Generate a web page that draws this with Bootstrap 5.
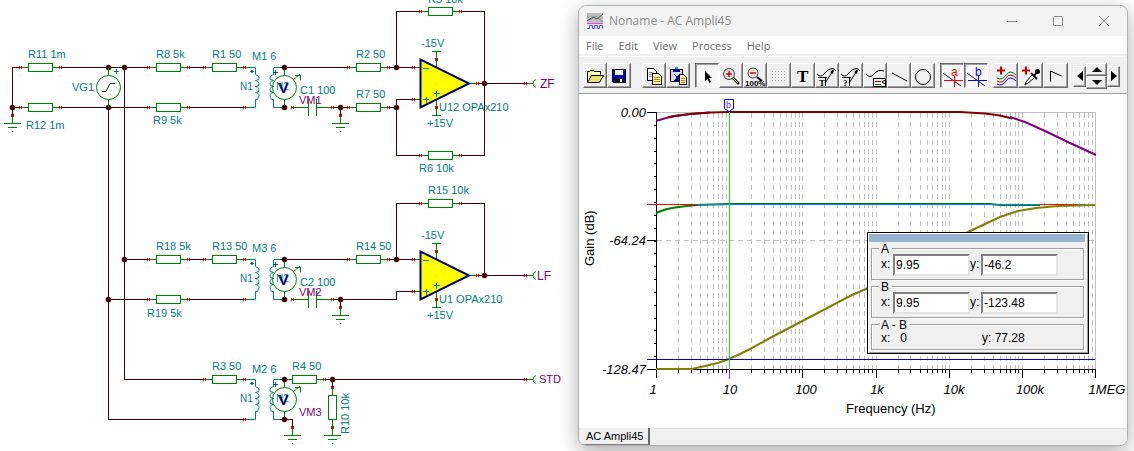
<!DOCTYPE html>
<html lang="en">
<head>
<meta charset="utf-8">
<meta name="viewport" content="width=device-width, initial-scale=1">
<title>Noname - AC Ampli45</title>
<link href="https://cdn.jsdelivr.net/npm/bootstrap@5.3.0/dist/css/bootstrap.min.css" rel="stylesheet">
<style>
  body { font-family: "Liberation Sans", Arial, sans-serif; font-size: 12px; line-height: 14px; color: #000; background: #fff; }
  .sheet { width: 50%; }
  .sheet svg, .plot svg { display: block; width: 100%; height: auto; }
  .sheet text { font-size: 11px; fill: #008080; }
  .sheet .small-t { font-size: 10px; }
  .sheet .probe { fill: #800080; }
  .sheet .out { font-size: 12px; fill: #800080; }
  .sheet .meter-v { font-size: 15px; font-weight: bold; fill: #000080; }
  .wire { stroke: #400000; fill: none; }
  .node-dot { fill: #400000; }
  .part { stroke: #008000; fill: none; }
  .pin { stroke: #d80000; fill: none; }
  .coil { stroke: #008080; fill: none; }

  .win { margin: 5px 6px 5px 11px; border: 1px solid #b0b0b0; border-radius: 8px; background: #f0f0f0; box-shadow: 0 6px 20px rgba(0,0,0,.32); overflow: hidden; min-width: 0; }
  .ui { font-family: "Open Sans", "Noto Sans", sans-serif; }
  .titlebar { height: 30px; background: #f3f3f3; color: #8a8a8a; padding-left: 8px; }
  .title-text { padding-left: 6px; }
  .caption-btn { width: 46px; height: 30px; border: 0; background: none; padding: 0; color: #8a8a8a; display: flex; align-items: center; justify-content: center; }
  .menu { height: 18px; background: #fff; gap: 15px; padding-left: 7px; line-height: 20px; font-size: 11px; }
  .menu a { color: #6d6d6d; text-decoration: none; }
  .tools { height: 40px; padding: 7px 0 0 4px; border-top: 2px solid #f0f0f0; border-bottom: 1px solid #a0a0a0; box-shadow: inset 0 1px #fff; column-gap: 5px; }
  .tools .after-file { margin-left: 6px; }
  .tb { width: 24px; height: 25px; padding: 0; border: 1px solid; border-color: #fff #696969 #696969 #fff; box-shadow: inset -1px -1px #a0a0a0; background: #f0f0f0; display: block; }
  .tb svg, .arrow svg { display: block; margin: auto; }
  .tb.wide { width: 25px; }
  .tb.down { border-color: #696969 #fff #fff #696969; box-shadow: inset 1px 1px #a0a0a0; background: #f8f8f8; }
  .arrow { padding: 0; border: 1px solid; border-color: #fff #696969 #696969 #fff; box-shadow: inset -1px -1px #a0a0a0; background: #f0f0f0; width: 13px; height: 21px; }
  .arrow.updown { width: 21px; height: 13px; display: block; }
  .plot { background: #fff; }
  .plot text { font-size: 13px; }
  .plot .mark-t { font-size: 9px; fill: #6020c0; }
  .tick-t { font-style: italic; }
  .ico-t { font-size: 12px; }
  .ico-pct { font-size: 8px; font-weight: bold; }
  .ico-serif { font: bold 17px "Liberation Serif", serif; }
  .ico-tag { font: bold 9px "Liberation Serif", serif; }

  .panel { top: 138px; right: 38px; width: 222px; border: 1px solid #000; background: #f0f0f0; padding: 1px 4px 3px 3px; box-shadow: inset 1px 1px #fff, inset -1px -1px #a0a0a0; }
  .panel-title { height: 8px; background: #99b4d1; margin: 0 -1px 0 -2px; }
  .grp { border: 1px solid #a0a0a0; box-shadow: 1px 1px #fff, inset 1px 1px #fff; position: relative; height: 32px; padding: 5px 0 0 9px; margin-top: 6px; }
  .grp legend { position: absolute; top: -7px; left: 7px; width: auto; float: none; margin: 0; padding: 0 3px 0 2px; font-size: 12px; line-height: 14px; background: #f0f0f0; }
  .grp label { width: 12px; line-height: 20px; }
  .grp input { width: 77px; height: 22px; padding: 0 1px; border: 2px solid; border-color: #808080 #e3e3e3 #e3e3e3 #808080; background: #fff; font-size: 12px; }
  .grp .ylab { width: 11px; }
  .grp.diff { height: 26px; }
  .grp output { line-height: 16px; }
  .sheet-tabs { height: 17px; border-top: 1px solid #e0e0e0; background: #f0f0f0; }
  .sheet-tab { font-size: 11px; line-height: 14px; height: 17px; margin: -1px 0 0 1px; padding: 0 5px 0 6px; border: 0; border-right: 2px solid #696969; border-bottom: 1px solid #808080; background: #f0f0f0; color: #000; }
</style>
</head>
<body class="d-flex align-items-start">

<main class="sheet flex-shrink-0">
<svg id="schematic" viewBox="0 0 567 451" role="img" aria-label="Circuit schematic">
  <defs>
    <g id="pin"><path class="pin" shape-rendering="crispEdges" d="M-1 -.500h1M1 -.500h1M-1 .500h3M-1 1.500h1M1 1.500h1"/></g>
    <g id="res">
      <path class="part" shape-rendering="crispEdges" d="M-20 .5h8M13 .5h8M-11.500 -3.500h24v8h-24z"/>
      <use href="#pin" x="-20"/><use href="#pin" x="20"/>
    </g>
    <g id="gnd">
      <path class="part" shape-rendering="crispEdges" d="M.5 8v8M-8 16.500h17M-4 20.500h9M0 24.500h1"/>
      <use href="#pin" y="8"/>
    </g>
    <g id="xfmr">
      <path class="part" shape-rendering="crispEdges" d="M0 .5h8M0 40.500h8M32 .5h8M32 40.500h8"/>
      <path class="coil" d="M6 .5h5.500v7q5 2 3 5l-3 1q5 1 3 5l-3 1q5 1 3 5l-3 1q5 1 3 5q-1 3-3 2v8H6M36 .5h-6.500v7q-5 2-3 5l3 1q-5 1-3 5l3 1q-5 1-3 5l3 1q-5 1-3 5q1 3 3 2v8H36"/>
      <path d="M8 3l2 1.500-2 1.500-2-1.500z" fill="#004040"/><path d="M29 5.500h5M31.500 3v5" stroke="#006060"/>
      <text class="small-t" x="-4" y="23">N1</text><text class="small-t" x="32" y="23">N2</text>
      <use href="#pin"/>
      <circle class="part" cx="40.500" cy="20.500" r="12"/>
      <path class="part" d="M40.500 1v7.500M40.500 32.500V40M50 12l6-5M51 8.500h5.500v5"/>
      <text class="meter-v" x="34.500" y="26">V</text>
      <circle class="node-dot" cx="40.500" cy=".5" r="2.800"/><circle class="node-dot" cx="40.500" cy="40.500" r="2.800"/>
    </g>
    <g id="cap">
      <path class="part" shape-rendering="crispEdges" d="M0 .5h16.500M16.500 -8v17M24.500 -8v17M24.500 .5h16"/>
      <use href="#pin"/><use href="#pin" x="40"/>
    </g>
    <g id="amp">
      <path class="part" shape-rendering="crispEdges" d="M-8 -15.500h9M-8 16.500h9M49 .5h8M16.500 -32v16M12 -31.500h9M16.500 16v17M12 32.500h9"/>
      <path d="M.5 -23.500v48l48.500-24z" fill="#ff0" stroke="#000080" stroke-width="2"/>
      <path class="coil" shape-rendering="crispEdges" d="M3 -14.500h6M3 16.500h6M6 13.500v6M14 10.500h6M16.500 7.500v6"/>
      <use href="#pin" x="-7" y="-16"/><use href="#pin" x="-7" y="16"/><use href="#pin" x="16" y="-24"/><use href="#pin" x="16" y="24"/><use href="#pin" x="57"/>
      <text x="1" y="-36">-15V</text><text x="7" y="44">+15V</text>
    </g>
    <g id="jack"><path class="part" d="M0 .5h8M11 -3.500q-3 1-3 4t3 4"/><use href="#pin"/></g>
  </defs>
  <path class="wire" shape-rendering="crispEdges" d="M20 67.500H12.500V115M12 107.500h8M60 67.500h88M60 107.500h88M188 67.500h16M188 107.500h56M284 67.500h64M332 107.500h16M340.500 107v8M388 67.500h24M388 107.500h8.500M396.500 67V11.500H420M460 11.500h24.500v144H460M420 155.500h-23.500V99.500H412M476 83.500h48
    M108.500 107v312.500H244M124.500 67v312.500H204M124 259.500h24M108 299.500h40M188 259.500h16M188 299.500h56M284 259.500h64M332 299.500h64.500v-8H412M340.500 299v8M388 259.500h24M396.500 259v-55.500H420M460 203.500h24.500v72M476 275.500h48
    M284 419.500h8.500v8M324 379.500h200M332.500 379v8"/>
  <g id="parts"></g>
  <circle class="part" cx="108.500" cy="87.500" r="12"/>
  <path class="part" d="M108.500 68v7.500M108.500 99.500v8"/>
  <path d="M102 91.500h4l4-8h5" stroke="#004000" fill="none"/><path class="coil" d="M114 71.500h5M116.500 69v5"/>
  <g transform="translate(332.500 407.500) rotate(90)"><path class="part" shape-rendering="crispEdges" d="M-20 0h8M12 0h8M-12 -4h24v8h-24z"/></g>
  <g id="labels"></g>
  <text transform="translate(349 434) rotate(-90)">R10 10k</text>
</svg>
</main>

<section class="win flex-fill" aria-label="Noname - AC Ampli45">
  <header class="titlebar ui d-flex align-items-center">
    <svg width="16" height="16" viewBox="0 0 16 16" aria-hidden="true"><path fill="#bdbdbd" d="M0 0h16v10H0z"/><path fill="#e4e4f4" d="M0 10h16v6H0z"/><path d="M0 3l4 4 4-4 3 2 5 4" stroke="#2fcf4f" fill="none"/><path d="M0 8l6-4 4 2 6-5" stroke="#883388" fill="none"/><path d="M0 10.500h16" stroke="#f4c"/><path d="M0 15.500h2.500v-3h3v3h2v-3h3v3h2v-3h3v3" stroke="#5050d0" fill="none"/></svg>
    <span class="title-text flex-fill text-nowrap">Noname - AC Ampli45</span>
    <button class="caption-btn" aria-label="Minimize"><svg width="10" height="10"><path d="M0 5.500h10" stroke="currentColor"/></svg></button>
    <button class="caption-btn" aria-label="Maximize"><svg width="10" height="10"><rect x=".5" y=".5" width="9" height="9" rx="1" stroke="currentColor" fill="none"/></svg></button>
    <button class="caption-btn" aria-label="Close"><svg width="10" height="10"><path d="M0 0l10 10M10 0L0 10" stroke="currentColor" fill="none"/></svg></button>
  </header>
  <nav class="menu ui d-flex">
    <a href="#">File</a><a href="#">Edit</a><a href="#">View</a><a href="#">Process</a><a href="#">Help</a>
  </nav>
  <div class="tools d-flex align-items-start" role="toolbar">
    <div class="d-flex">
      <button class="tb" aria-label="Open"><svg width="22" height="22" viewBox="0 0 22 22"><path d="M3.500 17V6.500h2l1-1h3l1 1h6v3" fill="#ffffb0" stroke="#000"/><path d="M3.500 17.500l4-7h12l-4 7z" fill="#e8e070" stroke="#000"/></svg></button>
      <button class="tb" aria-label="Save"><svg width="22" height="22" viewBox="0 0 22 22" shape-rendering="crispEdges"><path d="M4.500 4.500h13v13h-12l-1-1z" fill="#0000c0" stroke="#000"/><path d="M7 5h8v5H7z" fill="#f4f4f4"/><path d="M7 13h8v5H7z" fill="#000"/><path d="M12 14h2v3h-2z" fill="#fff"/></svg></button>
    </div>
    <div class="d-flex after-file">
      <button class="tb" aria-label="Copy"><svg width="22" height="22" viewBox="0 0 22 22" shape-rendering="crispEdges"><path d="M4.500 3.500h6l3 3v9h-9z" fill="#fff" stroke="#000"/><path d="M6 7.500h4M6 9.500h4M6 11.500h3" stroke="#888"/><path d="M9.500 8.500h6l3 3v8h-9z" fill="#ffff90" stroke="#000"/><path d="M11 12.500h6M11 14.500h6M11 16.500h6" stroke="#a08040"/></svg></button>
      <button class="tb" aria-label="Paste"><svg width="22" height="22" viewBox="0 0 22 22" shape-rendering="crispEdges"><path d="M3.500 4.500h12v12h-12z" fill="#d8d8e8" stroke="#000"/><path d="M6 4h7v3H6z" fill="#000080"/><path d="M8 2h3v2H8z" fill="#00a0ff"/><path d="M12.500 9.500h4l3 3v7h-7z" fill="#ffff90" stroke="#000"/><path d="M14 13.500h4M14 15.500h4M14 17.500h4" stroke="#a08040"/><path d="M7 9l4 4M12 10v5H8z" stroke="#000080" fill="#000080"/></svg></button>
    </div>
    <div class="d-flex">
      <button class="tb down" aria-label="Select"><svg width="22" height="22" viewBox="0 0 22 22"><path d="M9 6v10l2.500-2 2 4 1.500-1-2-4h3z" fill="#000"/></svg></button>
      <button class="tb" aria-label="Zoom in"><svg width="22" height="22" viewBox="0 0 22 22"><circle cx="9" cy="9" r="5.500" fill="#dfe6e6" stroke="#444"/><path d="M6 9h6M9 6v6" stroke="#e00000" stroke-width="1.500"/><path d="M13 13l6 6" stroke="#000" stroke-width="2.500"/><path d="M13 13l5 5" stroke="#dd0"/></svg></button>
      <button class="tb" aria-label="Zoom 100%"><svg width="22" height="22" viewBox="0 0 22 22"><circle cx="9" cy="8" r="5" fill="#dfe6e6" stroke="#444"/><path d="M6 8h6" stroke="#e00000" stroke-width="1.500"/><path d="M13 12l5 4" stroke="#000" stroke-width="2"/><text class="ico-pct" x="1" y="21">100%</text></svg></button>
      <button class="tb" aria-label="Grid"><svg width="22" height="22" viewBox="0 0 22 22" shape-rendering="crispEdges"><path d="M4 6.500h14M4 9.500h14M4 12.500h14M4 15.500h14" stroke="#aaa" stroke-dasharray="1 2"/></svg></button>
      <button class="tb" aria-label="Text"><svg width="22" height="22" viewBox="0 0 22 22"><text class="ico-serif" x="5" y="17">T</text></svg></button>
      <button class="tb" aria-label="Curve label"><svg width="22" height="22" viewBox="0 0 22 22"><path d="M1 9q4 4 7 0t6-5q4-2 6 2M9 18L17 6M2 12.500h9M9.500 12v9" stroke="#000" fill="none"/><path d="M18 4l-4 3 3 2z"/><text class="ico-tag" x="3" y="21">T</text></svg></button>
      <button class="tb" aria-label="Curve query"><svg width="22" height="22" viewBox="0 0 22 22"><path d="M1 9q4 4 7 0t6-5q4-2 6 2M9 18L17 6M2 12.500h9M9.500 12v9" stroke="#000" fill="none"/><path d="M18 4l-4 3 3 2z"/><text class="ico-tag" x="3" y="21">?</text></svg></button>
      <button class="tb" aria-label="Legend"><svg width="22" height="22" viewBox="0 0 22 22"><path d="M2 9q4 5 8 0t10-3M9.500 13.500h12v8h-12z" stroke="#000" fill="none"/><path d="M11 16.500h6" stroke="#a00000"/><path d="M11 19.500h6" stroke="#008000"/><path d="M21 15l-3 2 3 2" stroke="#000" fill="none"/></svg></button>
      <button class="tb" aria-label="Line"><svg width="22" height="22" viewBox="0 0 22 22"><path d="M4 8l15 8" stroke="#000"/></svg></button>
      <button class="tb" aria-label="Ellipse"><svg width="22" height="22" viewBox="0 0 22 22"><circle cx="11" cy="12" r="7.500" stroke="#000" fill="none"/></svg></button>
    </div>
    <div class="d-flex">
      <button class="tb down" aria-label="Cursor a"><svg width="22" height="22" viewBox="0 0 22 22"><path d="M2 8l18 13" stroke="#000"/><path d="M3 15.500h19M13.500 11v11" stroke="red" shape-rendering="crispEdges"/><text class="ico-t" x="10" y="11" fill="red">a</text></svg></button>
      <button class="tb down" aria-label="Cursor b"><svg width="22" height="22" viewBox="0 0 22 22"><path d="M2 8l18 13" stroke="#000"/><path d="M3 15.500h19M13.500 11v11" stroke="blue" shape-rendering="crispEdges"/><text class="ico-t" x="10" y="11" fill="blue">b</text></svg></button>
    </div>
    <div class="d-flex">
      <button class="tb wide" aria-label="Add curves"><svg width="22" height="22" viewBox="0 0 22 22"><path d="M2 5.500h8M6 1.500v8" stroke="#c00000" stroke-width="2"/><g fill="none"><path d="M2 13q5 3 9-3t10 0" stroke="#008000"/><path d="M2 16q5 3 9-3t10 0" stroke="#a00000"/><path d="M2 19q5 3 9-3t10 0" stroke="#0000ff"/></g></svg></button>
      <button class="tb wide" aria-label="Pick curve"><svg width="22" height="22" viewBox="0 0 22 22"><path d="M2 5.500h8M6 1.500v8" stroke="#c00000" stroke-width="2"/><path d="M12 10l-6 7-1 2.500 2.500-1 7-6" fill="#fff" stroke="#000"/><path d="M11 8l6 6M14 11l3-4" stroke="#000" stroke-width="2"/><circle cx="17.500" cy="6.500" r="2.500"/></svg></button>
      <button class="tb wide" aria-label="Run"><svg width="22" height="22" viewBox="0 0 22 22" fill="none"><path d="M5.500 17V6l12 5.500" stroke="#000"/><path d="M5.500 17l12-5.500" stroke="#fff"/></svg></button>
    </div>
    <div class="d-flex align-items-center">
      <button class="arrow" aria-label="Left"><svg width="6" height="10"><path d="M6 0v10L0 5z"/></svg></button>
      <div>
        <button class="arrow updown" aria-label="Up"><svg width="10" height="5"><path d="M0 5h10L5 0z"/></svg></button>
        <button class="arrow updown" aria-label="Down"><svg width="10" height="5"><path d="M0 0h10L5 5z"/></svg></button>
      </div>
      <button class="arrow" aria-label="Right"><svg width="6" height="10"><path d="M0 0v10l6-5z"/></svg></button>
    </div>
  </div>

  <div class="plot position-relative">
    <svg viewBox="579 94 548 334" role="img" aria-label="Gain against frequency">
      <g shape-rendering="crispEdges" fill="none">
        <path id="grid" stroke="#c0c0c0" stroke-dasharray="5 4"/>
        <path stroke="#c0c0c0" d="M657 112.500h438.500V369"/>
        <path stroke="#000" d="M647 112.500h9.500V378M647 240.500h9M647 369.500h449"/>
        <path id="ticks" stroke="#000"/>
      </g>
      <g fill="none" stroke-width="2">
        <path stroke="#008000" d="M656 213l5-2 6-2 8-1.500 12-1.500 10-1 32-1h261l10 1h40"/>
        <path stroke="#f00" stroke-width="1" shape-rendering="crispEdges" d="M647 204.500h50M1039 204.500h40"/>
        <path stroke="#0080ff" stroke-width="1" shape-rendering="crispEdges" d="M697 204.500h342M1078 204.500h8"/>
        <path stroke="#808000" d="M656 369h36l13-3 13-3 11-4 11-5 10-5 20-11 80-42 18-8 100-56 17-8 15-7 18-6 18-3 22-2 37-1"/>
        <path stroke="#800080" d="M656 121l10-3 9-2 15-2 20-1.500"/>
        <path stroke="#800000" d="M668 117l7-1 15-2 20-1.500 19-.5h231l25 1.500 15 2 12 3"/>
        <path stroke="#800080" d="M1010 117l15 5 20 9 25 12 26 12"/>
      </g>
      <g shape-rendering="crispEdges">
        <path stroke="#0000c8" d="M647 359.500h448"/>
        <path stroke="#00f000" d="M729.500 112v257"/><path stroke="#f0f" d="M729.500 369v10"/>
      </g>
      <path d="M724.500 99.500h9v9l-4.500 3-4.500-3z" fill="#fff" stroke="#0000ff"/>
      <text class="mark-t" x="726" y="108">b</text>
      <g class="tick-t">
        <text text-anchor="end" x="646" y="117">0.00</text><text text-anchor="end" x="646" y="245">-64.24</text><text text-anchor="end" x="646" y="374">-128.47</text>
        <g text-anchor="middle"><text x="653" y="394">1</text><text x="730" y="394">10</text><text x="806" y="394">100</text><text x="877" y="394">1k</text><text x="954" y="394">10k</text><text x="1030" y="394">100k</text><text x="1107" y="394">1MEG</text></g>
      </g>
      <text x="846" y="413">Frequency (Hz)</text>
      <text transform="translate(594 266) rotate(-90)">Gain (dB)</text>
    </svg>

    <form class="panel position-absolute">
      <div class="panel-title"></div>
      <fieldset class="grp d-flex"><legend>A</legend>
        <label for="ax">x:</label><input id="ax" value="9.95"><label class="ylab" for="ay">y:</label><input id="ay" value="-46.2">
      </fieldset>
      <fieldset class="grp d-flex"><legend>B</legend>
        <label for="bx">x:</label><input id="bx" value="9.95"><label class="ylab" for="by">y:</label><input id="by" value="-123.48">
      </fieldset>
      <fieldset class="grp diff d-flex"><legend>A - B</legend>
        <output class="col-6">x:&nbsp;&nbsp; 0</output><output>y: 77.28</output>
      </fieldset>
    </form>
  </div>
  <footer class="sheet-tabs d-flex"><button class="sheet-tab">AC Ampli45</button></footer>
</section>

<script src="https://cdn.jsdelivr.net/npm/bootstrap@5.3.0/dist/js/bootstrap.bundle.min.js"></script>
<script>
  // Schematic parts: symbol, then its anchor points
  const parts = {
    res: [[40,67],[40,107],[168,67],[168,107],[224,67],[368,67],[368,107],[440,11],[440,155],[168,259],[224,259],[168,299],[368,259],[440,203],[224,379],[304,379]],
    xfmr: [[244,67],[244,259],[244,379]],
    cap: [[292,107],[292,299]],
    gnd: [[12,107],[340,107],[340,299],[292,419],[332,419]],
    amp: [[420,83],[420,275]],
    jack: [[525,83],[525,275],[525,379]],
    pin: [[244,107],[244,299],[244,419],[332,387]]
  };
  const dots = [[108,67],[124,67],[12,107],[108,107],[340,107],[396,67],[396,107],[484,83],[124,259],[108,299],[340,299],[396,259],[484,275],[332,379]];
  document.getElementById('parts').innerHTML =
    Object.entries(parts).map(([s, at]) => at.map(([x, y]) => `<use href="#${s}" x="${x}" y="${y}"/>`).join('')).join('') +
    dots.map(([x, y]) => `<circle class="node-dot" cx="${x + .5}" cy="${y + .5}" r="2.8"/>`).join('');

  const labels = [
    ['R11 1m',28,58],['R12 1m',26,129],['VG1',72,91],['R8 5k',156,58],['R9 5k',153,124],['R1 50',212,58],['M1 6',252,60],['C1 100',300,94],['VM1',299,104,'probe'],
    ['R2 50',356,58],['R7 50',356,98],['R5 10k',428,3],['R6 10k',419,172],['U12 OPAx210',439,111],['ZF',540,88,'out'],
    ['R18 5k',156,250],['R13 50',212,250],['R19 5k',147,317],['M3 6',252,252],['C2 100',300,286],['VM2',299,296,'probe'],['R14 50',356,250],['R15 10k',428,194],['U1 OPAx210',439,303],['LF',537,280,'out'],
    ['R3 50',212,370],['M2 6',252,373],['R4 50',292,370],['VM3',299,416,'probe'],['STD',539,383,'probe']
  ];
  document.getElementById('labels').innerHTML =
    labels.map(([t, x, y, c]) => `<text x="${x}" y="${y}" class="${c || ''}">${t}</text>`).join('');

  // Logarithmic frequency grid, six decades from 1 Hz to 1 MHz
  const px = f => Math.round(656 + 439 * Math.log10(f) / 6) + .5;
  let grid = 'M657 240.5H1095', ticks = '';
  for (let d = 0; d < 6; d++) for (let m = 1; m < 10; m++) {
    const x = px(m * 10 ** d);
    if (m > 1 || d) grid += `M${x} 113V369`;
    ticks += `M${x} 369v${m === 1 ? 9 : 4}`;
  }
  ticks += 'M1095.5 369v9';
  for (let i = 1; i < 20; i++) ticks += `M654 ${Math.round(112 + i * 12.85) + .5}h2`;
  document.getElementById('grid').setAttribute('d', grid);
  document.getElementById('ticks').setAttribute('d', ticks);
</script>
</body>
</html>
